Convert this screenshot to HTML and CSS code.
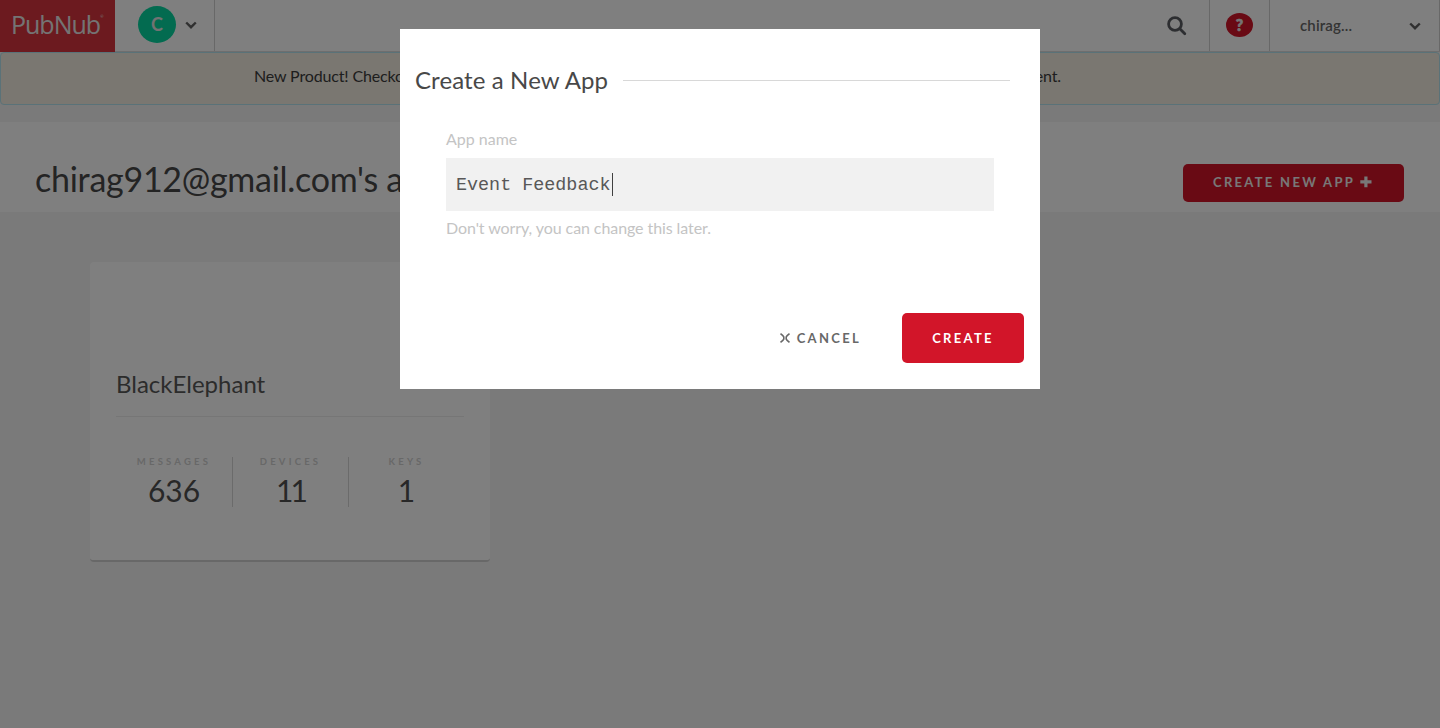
FILE: index.html
```
<!DOCTYPE html>
<html lang="en">
<head>
<meta charset="utf-8">
<title>PubNub Admin</title>
<link rel="stylesheet" href="styles.css">
</head>
<body>
<header class="topbar">
  <div class="logo"><span class="logo-name">PubNub</span><span class="logo-mark">®</span></div>
  <div class="account">
    <span class="avatar">C</span>
    <svg class="chevron" viewBox="0 0 12 8"><path d="M1.200 1.500 6 6.200l4.800-4.700"/></svg>
  </div>
  <div class="search">
    <svg viewBox="0 0 20 20" width="20" height="20"><circle cx="8" cy="8" r="6.4"/><path d="m12.8 12.8 5 5"/></svg>
  </div>
  <div class="help"><span class="help-badge">?</span></div>
  <div class="user">
    <span class="user-name">chirag...</span>
    <svg class="chevron" viewBox="0 0 12 8"><path d="M1.200 1.500 6 6.200l4.800-4.700"/></svg>
  </div>
</header>
<div class="banner"><span class="banner-start">New Product! Checkout</span><span class="banner-end">environment.</span></div>
<section class="titlebar">
  <h1 class="title">chirag912@gmail.com's apps</h1>
  <button class="new-app"><span class="new-app-label">CREATE NEW APP</span><svg viewBox="0 0 12 12" width="12" height="12"><path d="M4.3 .5h3.2v3.8h4v3.2h-4v3.8H4.3V7.5h-4V4.3h4z"/></svg></button>
</section>
<main class="apps">
  <article class="card">
    <h2 class="card-name"><span class="card-text">BlackElephant</span></h2>
    <div class="stats">
      <div class="stat"><span class="stat-label">MESSAGES</span><span class="stat-value">636</span></div>
      <div class="stat"><span class="stat-label">DEVICES</span><span class="stat-value narrow">11</span></div>
      <div class="stat"><span class="stat-label">KEYS</span><span class="stat-value">1</span></div>
    </div>
  </article>
</main>
<div class="overlay">
  <div class="modal">
    <div class="modal-head"><h2 class="modal-title">Create a New App</h2><span class="rule"></span></div>
    <div class="field">
      <label class="field-label">App name</label>
      <div class="input"><span class="input-text">Event Feedback</span><span class="caret"></span></div>
      <p class="hint">Don't worry, you can change this later.</p>
    </div>
    <div class="actions">
      <button class="cancel"><svg viewBox="0 0 10 10" width="10" height="10"><path d="M.5.700 2.800 2.500 3.800 4v2L2.800 7.500.5 9.300M9.500.7 7.200 2.500 6.200 4v2l1 1.500 2.300 1.800"/></svg><span class="cancel-label">CANCEL</span></button>
      <button class="create"><span class="create-label">CREATE</span></button>
    </div>
  </div>
</div>
</body>
</html>
```
FILE: styles.css
```
* { box-sizing: border-box; }
body { margin: 0; height: 728px; overflow: hidden; background: #f4f4f4; color: #484848; font-family: Lato, "Liberation Sans", sans-serif; }
h1, h2, p { margin: 0; font-weight: 400; }
button { border: 0; padding: 0; margin: 0; background: none; font: inherit; letter-spacing: inherit; white-space: nowrap; }
svg { display: block; flex: none; }
.topbar { display: flex; height: 52px; background: #fff; border-bottom: 1px solid #dcdcdc; }
.logo { display: flex; width: 115px; height: 52px; padding: 7px 0 0 11px; background: #d9343f; color: #e8e8e8; line-height: 35px; }
.logo-name { font-family: "Open Sans", sans-serif; font-size: 25px; font-weight: 500; letter-spacing: -1px; }
.logo-mark { font-size: 4px; line-height: 20px; }
.account { display: flex; width: 100px; padding: 6px 17px 0 23px; justify-content: space-between; border-right: 1px solid #d0d0d0; }
.avatar { width: 38px; height: 37px; border-radius: 50%; background: #06d6a0; color: #e4e4e4; text-align: center; font-size: 18px; font-weight: 700; line-height: 36px; }
.chevron { width: 12px; height: 8px; margin-top: 15px; fill: none; stroke: #606060; stroke-width: 2.4; }
.search { margin-left: auto; width: 62px; padding: 16px 0 0 19px; border-right: 1px solid #d0d0d0; fill: none; stroke: #5a5d62; stroke-width: 2.8; stroke-linecap: round; }
.help { width: 60px; padding: 13px 0 0 16px; border-right: 1px solid #d0d0d0; }
.help-badge { display: block; width: 27px; height: 24px; border-radius: 50%; background: #d21529; color: #e8e8e8; text-align: center; font: 900 16px/24px Lato, sans-serif; -webkit-text-stroke: .6px #e8e8e8; }
.user { display: flex; width: 170px; padding: 0 18px 0 30px; justify-content: space-between; border-right: 1px solid #d0d0d0; font-size: 15px; line-height: 51px; color: #686868; }
.user-name { font-weight: 600; letter-spacing: .15px; }
.user .chevron { margin-top: 22px; }
.banner { display: flex; height: 53px; padding: 0 378px 0 253px; justify-content: space-between; background: #f4eee2; border: 1px solid #b4e4f0; border-radius: 4px; font-size: 16px; line-height: 45px; letter-spacing: -.15px; color: #3c3c3c; }
.titlebar { display: flex; height: 90px; margin-top: 17px; padding: 41px 36px 0 35px; justify-content: space-between; background: #fff; }
.title { font-size: 34px; line-height: 32px; letter-spacing: -.27px; }
.new-app { display: flex; width: 221px; height: 38px; margin-top: 1px; padding: 12px 0 0 30px; background: #d21529; color: #f0f0f0; border-radius: 5px; gap: 5px; font-size: 13px; font-weight: 700; line-height: 13px; letter-spacing: 2.3px; }
.new-app svg { fill: #f0f0f0; }
.apps { padding: 50px 90px; }
.card { width: 400px; height: 300px; padding: 107px 26px 0; background: #fff; border-radius: 4px; border-bottom: 2px solid #d0d0d0; }
.card-name { height: 48px; border-bottom: 1px solid #ececec; font-size: 24px; line-height: 29px; color: #585858; }
.stats { display: grid; grid-template-columns: 117px 116px 115px; padding-top: 40px; }
.stat { display: flex; flex-direction: column; align-items: center; height: 50px; border-right: 1px solid #d6d6d6; }
.stat:last-child { border-right: 0; }
.stat-label { font-size: 9.5px; font-weight: 700; letter-spacing: 3.2px; line-height: 9px; color: #d0d0d0; }
.stat-value { font-size: 30px; line-height: 48px; color: #505050; }
.narrow { letter-spacing: -3px; }
.overlay { position: absolute; inset: 0; display: flex; justify-content: center; padding-top: 29px; background: rgba(0,0,0,.5); }
.modal { width: 640px; height: 360px; background: #fff; }
.modal-head { display: flex; padding: 36px 30px 0 15px; gap: 15px; align-items: center; }
.modal-title { font-size: 24px; line-height: 30px; letter-spacing: .11px; white-space: nowrap; color: #484848; }
.rule { flex: 1; height: 1px; background: #d8d8d8; }
.field { padding: 34px 46px 0; color: #c4c4c4; font-size: 16px; }
.field-label { display: block; height: 29px; line-height: 20px; }
.input { display: flex; height: 53px; padding: 0 10px; align-items: center; background: #f1f1f1; color: #585858; font: 18.4px/55px "Liberation Mono", monospace; }
.input-text { padding-top: 2px; }
.caret { width: 1px; height: 23px; margin-left: 1px; background: #404040; }
.hint { padding-top: 7px; line-height: 20px; letter-spacing: -.08px; }
.actions { display: flex; justify-content: flex-end; gap: 41px; padding: 75px 16px 0; font-size: 13px; font-weight: 700; letter-spacing: 2.3px; }
.cancel { display: flex; align-items: center; gap: 7px; color: #686868; }
.cancel svg { fill: none; stroke: #686868; stroke-width: 1.6; }
.create { width: 122px; height: 50px; border-radius: 5px; background: #d21529; color: #fff; }
```
